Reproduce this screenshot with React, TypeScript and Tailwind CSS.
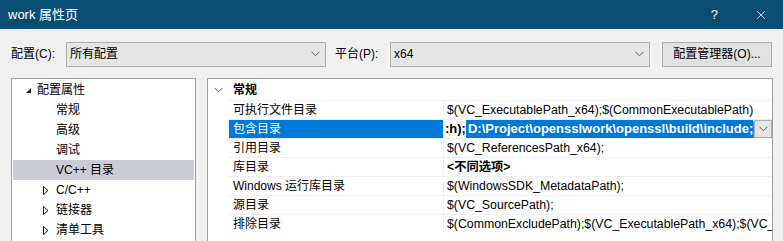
import { X } from "lucide-react";

const font = { fontFamily: '"Liberation Sans", "Noto Sans CJK SC", sans-serif' };

type TreeItem = { label: string; level: 0 | 1; arrow?: "open" | "closed"; selected?: boolean };

const tree: TreeItem[] = [
  { label: "配置属性", level: 0, arrow: "open" },
  { label: "常规", level: 1 },
  { label: "高级", level: 1 },
  { label: "调试", level: 1 },
  { label: "VC++ 目录", level: 1, selected: true },
  { label: "C/C++", level: 1, arrow: "closed" },
  { label: "链接器", level: 1, arrow: "closed" },
  { label: "清单工具", level: 1, arrow: "closed" },
];

const rows: { name: string; value: string; bold?: boolean; editing?: boolean }[] = [
  { name: "可执行文件目录", value: "$(VC_ExecutablePath_x64);$(CommonExecutablePath)" },
  { name: "包含目录", value: "", editing: true },
  { name: "引用目录", value: "$(VC_ReferencesPath_x64);" },
  { name: "库目录", value: "<不同选项>", bold: true },
  { name: "Windows 运行库目录", value: "$(WindowsSDK_MetadataPath);" },
  { name: "源目录", value: "$(VC_SourcePath);" },
  { name: "排除目录", value: "$(CommonExcludePath);$(VC_ExecutablePath_x64);$(VC_LibraryPath_x64)" },
];

function Chevron({ className = "" }: { className?: string }) {
  return (
    <svg width="9" height="6" viewBox="0 0 9 6" className={className}>
      <path d="M0.5 0.8 L4.5 4.8 L8.5 0.8" fill="none" stroke="#606060" strokeWidth="1" />
    </svg>
  );
}

function Combo({ text, width }: { text: string; width: string }) {
  return (
    <div className={`${width} h-[25px] bg-[#e5e5e5] border border-[#adadad] flex items-center justify-between pl-[3px] pr-[5px]`}>
      <span className="text-[12px] text-black">{text}</span>
      <Chevron />
    </div>
  );
}

function TreeArrow({ kind }: { kind: "open" | "closed" }) {
  if (kind === "open") {
    return (
      <svg width="7" height="7" viewBox="0 0 7 7">
        <path d="M6 1 L6 6 L1 6 Z" fill="#1e1e1e" />
      </svg>
    );
  }
  return (
    <svg width="6" height="9" viewBox="0 0 6 9">
      <path d="M0.5 0.5 L5 4.5 L0.5 8.5 Z" fill="none" stroke="#1e1e1e" strokeWidth="1" />
    </svg>
  );
}

export default function App() {
  return (
    <div className="w-[783px] h-[241px] overflow-hidden bg-[#f0f0f0] text-[12px] text-black" style={font}>
      <div className="h-[29px] bg-[#0a4d72] flex items-center justify-between pl-[8px] pr-[15px] text-white">
        <span className="text-[13px]">work 属性页</span>
        <div className="flex items-center gap-[36px]">
          <span className="text-[13px]">?</span>
          <X className="w-[14px] h-[14px]" strokeWidth={1.3} />
        </div>
      </div>

      <div className="flex items-center mt-[12px] h-[26px] pl-[11px]">
        <span className="w-[55px]">配置(C):</span>
        <Combo text="所有配置" width="w-[260px]" />
        <span className="ml-[9px] w-[55px]">平台(P):</span>
        <Combo text="x64" width="w-[260px]" />
        <div className="ml-[12px] w-[110px] h-[25px] bg-[#e1e1e1] border border-[#adadad] flex items-center justify-center">
          配置管理器(O)...
        </div>
      </div>

      <div className="flex mt-[11px] pl-[11px] gap-[11px]">
        <div className="w-[185px] h-[170px] bg-white border border-[#a0a0a0] p-px">
          {tree.map((t) => (
            <div
              key={t.label}
              className={`h-[20px] flex items-center ${t.selected ? "bg-[#ccccd9]" : ""}`}
            >
              <div className={`flex items-center justify-center w-[8px] ${t.level === 0 ? "ml-[11px]" : "ml-[29px]"}`}>
                {t.arrow && <TreeArrow kind={t.arrow} />}
              </div>
              <span className={t.level === 0 ? "ml-[5px]" : "ml-[6px]"}>{t.label}</span>
            </div>
          ))}
        </div>

        <div className="w-[566px] h-[170px] bg-white border border-[#a0a0a0] overflow-hidden">
          <div className="h-[21px] flex items-center">
            <Chevron className="ml-[6px]" />
            <span className="ml-[10px] font-bold">常规</span>
          </div>
          {rows.map((r) => (
            <div key={r.name} className="flex h-[19px] ml-[21px]">
              <div
                className={`w-[214px] border-t border-[#f0f0f0] flex items-center pl-[4px] ${
                  r.editing ? "bg-[#0078d7] text-white border-[#0078d7]" : ""
                }`}
              >
                {r.name}
              </div>
              <div className="flex-1 border-t border-l border-[#f0f0f0] flex items-center overflow-hidden whitespace-nowrap text-[12.3px]">
                {r.editing ? (
                  <div className="flex items-center w-full h-full">
                    <div className="flex-1 flex items-center overflow-hidden font-bold text-[13px]">
                      <span className="pl-[1px] shrink-0">:h);</span>
                      <span className="bg-[#0078d7] text-white pl-[2px] h-[18px] flex items-center overflow-hidden">
                        D:\Project\opensslwork\openssl\build\include;
                      </span>
                      <span className="w-px h-[17px] bg-[#e05a3a] shrink-0" />
                    </div>
                    <div className="w-[18px] h-[18px] shrink-0 bg-[#e5e5e5] border border-[#adadad] flex items-center justify-center">
                      <Chevron />
                    </div>
                  </div>
                ) : (
                  <span className={`pl-[3px] ${r.bold ? "font-bold" : ""}`}>{r.value}</span>
                )}
              </div>
            </div>
          ))}
        </div>
      </div>
    </div>
  );
}
